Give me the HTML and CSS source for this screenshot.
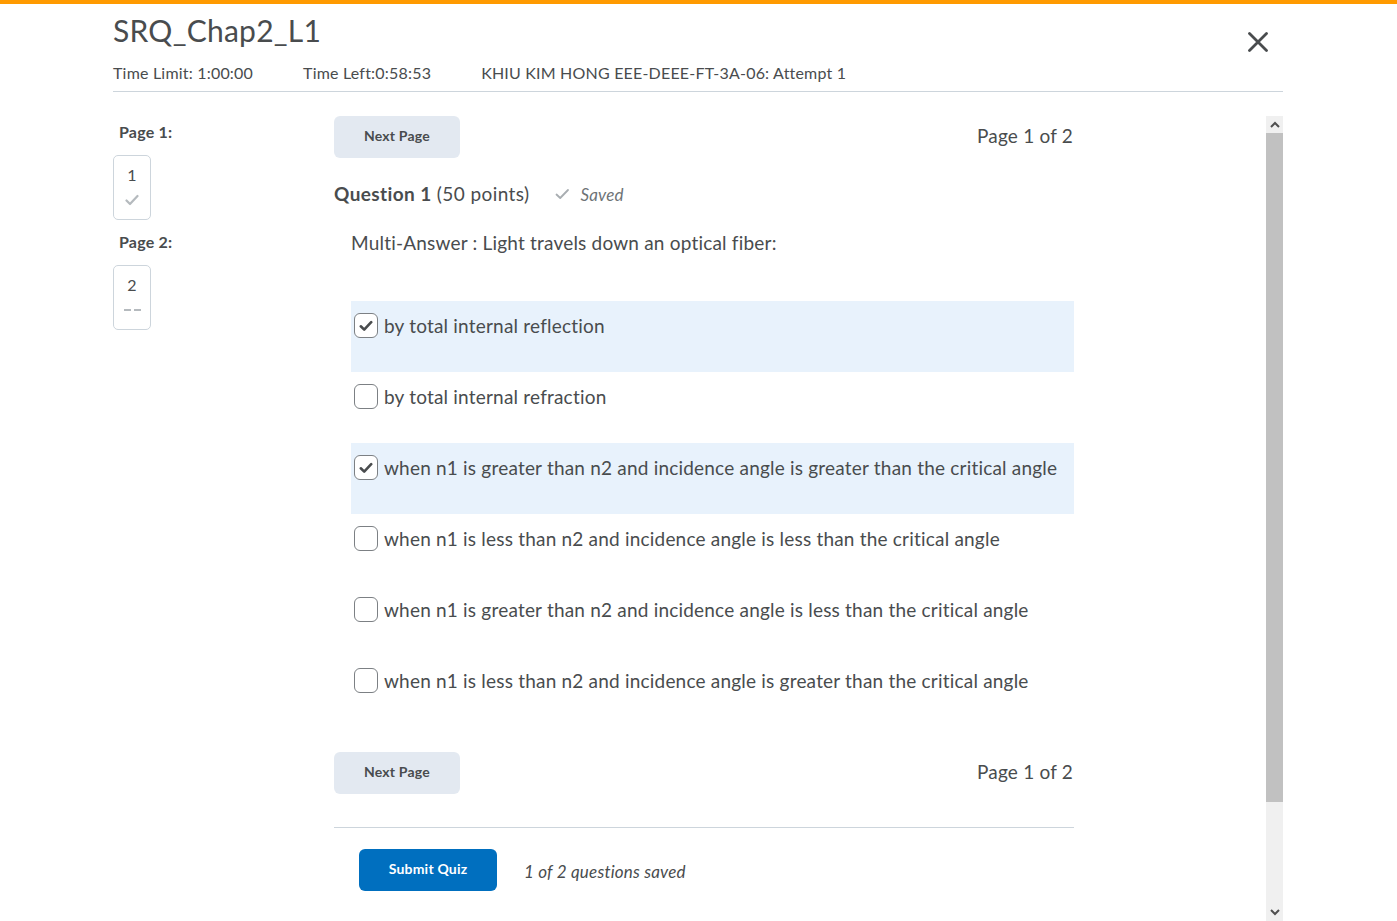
FILE: index.html
```html
<!DOCTYPE html>
<html lang="en">
<head>
<meta charset="utf-8">
<title>SRQ_Chap2_L1</title>
<link rel="stylesheet" href="styles.css">
</head>
<body>
<div class="topbar"></div>
<div class="wrap">
  <header class="header">
    <div class="title-row">
      <h1 class="title">SRQ_Chap2_L1</h1>
      <button class="close" aria-label="Close">
        <svg width="20" height="20" viewBox="0 0 20 20"><path d="M1.5 1.5 L18.5 18.5 M18.5 1.5 L1.5 18.5" stroke="#494c4e" stroke-width="2.8" stroke-linecap="round"/></svg>
      </button>
    </div>
    <div class="meta">
      <span class="meta-item">Time Limit: 1:00:00</span>
      <span class="meta-item">Time Left:0:58:53</span>
      <span class="meta-item">KHIU KIM HONG EEE-DEEE-FT-3A-06: Attempt 1</span>
    </div>
  </header>
  <div class="body">
    <div class="scroll">
      <nav class="nav">
        <div class="nav-label">Page 1:</div>
        <div class="nav-box">
          <span class="nav-num">1</span>
          <svg class="nav-check" width="14" height="12" viewBox="0 0 14 12"><path d="M1.5 6.5 L5 10 L12.5 2" fill="none" stroke="#b5babe" stroke-width="2.2" stroke-linecap="round" stroke-linejoin="round"/></svg>
        </div>
        <div class="nav-label">Page 2:</div>
        <div class="nav-box">
          <span class="nav-num">2</span>
          <span class="nav-dash"><i></i><i></i></span>
        </div>
      </nav>
      <main class="main">
        <div class="pager">
          <button class="btn-secondary">Next Page</button>
          <span class="page-of">Page 1 of 2</span>
        </div>
        <div class="q-head">
          <span class="q-title"><b>Question 1</b> (50 points)</span>
          <span class="saved">
            <svg width="15" height="12" viewBox="0 0 15 12"><path d="M1.5 6.5 L5.2 10 L13 2" fill="none" stroke="#a8adb1" stroke-width="1.8" stroke-linecap="round" stroke-linejoin="round"/></svg>
            <em>Saved</em>
          </span>
        </div>
        <p class="q-text">Multi-Answer : Light travels down an optical fiber:</p>
        <ul class="options">
          <li class="option selected"><span class="cb checked"><svg width="14" height="12" viewBox="0 0 14 12"><path d="M1.8 6.3 L5.2 9.6 L12.2 2.2" fill="none" stroke="#494c4e" stroke-width="2.6" stroke-linecap="round" stroke-linejoin="round"/></svg></span><span class="opt-text">by total internal reflection</span></li>
          <li class="option"><span class="cb"></span><span class="opt-text">by total internal refraction</span></li>
          <li class="option selected"><span class="cb checked"><svg width="14" height="12" viewBox="0 0 14 12"><path d="M1.8 6.3 L5.2 9.6 L12.2 2.2" fill="none" stroke="#494c4e" stroke-width="2.6" stroke-linecap="round" stroke-linejoin="round"/></svg></span><span class="opt-text">when n1 is greater than n2 and incidence angle is greater than the critical angle</span></li>
          <li class="option"><span class="cb"></span><span class="opt-text">when n1 is less than n2 and incidence angle is less than the critical angle</span></li>
          <li class="option"><span class="cb"></span><span class="opt-text">when n1 is greater than n2 and incidence angle is less than the critical angle</span></li>
          <li class="option"><span class="cb"></span><span class="opt-text">when n1 is less than n2 and incidence angle is greater than the critical angle</span></li>
        </ul>
        <div class="pager pager-bottom">
          <button class="btn-secondary">Next Page</button>
          <span class="page-of">Page 1 of 2</span>
        </div>
        <hr class="divider">
        <div class="submit-row">
          <button class="btn-primary">Submit Quiz</button>
          <em class="saved-count">1 of 2 questions saved</em>
        </div>
      </main>
    </div>
    <div class="scrollbar">
      <div class="sb-btn"><svg width="10" height="7" viewBox="0 0 10 7"><path d="M1 6 L5 2 L9 6" fill="none" stroke="#505050" stroke-width="2"/></svg></div>
      <div class="sb-thumb"></div>
      <div class="sb-track"></div>
      <div class="sb-btn"><svg width="10" height="7" viewBox="0 0 10 7"><path d="M1 1 L5 5 L9 1" fill="none" stroke="#505050" stroke-width="2"/></svg></div>
    </div>
  </div>
</div>
</body>
</html>
```

FILE: styles.css
```css
* { box-sizing: border-box; }
html, body { margin: 0; padding: 0; height: 100%; overflow: hidden; }
body {
  font-family: Lato, "Open Sans", "Liberation Sans", sans-serif;
  color: #494c4e;
  background: #fff;
  display: flex;
  flex-direction: column;
  letter-spacing: 0.2px;
  padding-right: 1px;
}
.topbar { height: 4px; background: #ff9a00; flex: none; margin-right: -1px; }
.wrap {
  width: 1170px;
  margin: 0 auto;
  flex: 1;
  display: flex;
  flex-direction: column;
  min-height: 0;
}
.header { border-bottom: 1px solid #cdd5dc; padding-bottom: 7px; flex: none; }
.title-row { display: flex; justify-content: space-between; align-items: flex-start; }
.title {
  margin: 8px 0 0 0;
  font-size: 30px;
  font-weight: 400;
  line-height: 36px;
  color: #494c4e;
  letter-spacing: 0.25px;
}
.close {
  border: 0; background: none; padding: 0;
  margin: 28px 15px 0 0;
  width: 20px; height: 20px;
  display: flex;
}
.meta { display: flex; margin-top: 10px; font-size: 16px; line-height: 22px; }
.meta-item { margin-right: 50px; }
.body {
  flex: 1;
  min-height: 0;
  display: flex;
  margin-top: 24px;
}
.scroll { flex: 1; display: flex; overflow: hidden; }
.nav { width: 221px; flex: none; }
.nav-label {
  font-size: 16px; font-weight: 700; line-height: 22px;
  padding-left: 6px; margin-top: 5px; margin-bottom: 12px;
}
.nav-box + .nav-label { margin-top: 11px; }
.nav-box {
  width: 38px; height: 65px;
  border: 1px solid #cdd5dc; border-radius: 5px;
  display: flex; flex-direction: column; align-items: center;
  padding-top: 8px;
}
.nav-num { font-size: 16px; line-height: 22px; }
.nav-check { margin-top: 8px; }
.nav-dash { display: flex; gap: 3px; margin-top: 13px; }
.nav-dash i { display: block; width: 7px; height: 2px; background: #b5babe; }
.main { width: 740px; flex: none; }
.pager { display: flex; justify-content: space-between; align-items: center; height: 42px; }
.btn-secondary {
  font-family: inherit;
  letter-spacing: 0.2px;
  width: 126px; height: 42px;
  border: 0; border-radius: 6px;
  background: #e3e9f1; color: #494c4e;
  font-size: 14px; font-weight: 700;
  padding: 0 0 3px 0;
}
.page-of { font-size: 19px; padding-right: 1px; margin-bottom: 4px; }
.q-head { display: flex; align-items: center; margin-top: 22px; height: 28px; }
.q-title { font-size: 19px; letter-spacing: 0.4px; margin-top: -2px; }
.q-title b { font-weight: 700; }
.saved { display: flex; align-items: center; margin-left: 26px; color: #6e7376; font-size: 17px; }
.saved svg { margin-right: 10px; }
.q-text { font-size: 19px; line-height: 28px; margin: 21px 0 0 17px; }
.options { list-style: none; margin: 44px 0 0 17px; padding: 0; }
.option {
  height: 71px;
  display: flex;
  align-items: flex-start;
  padding-top: 12px;
  padding-left: 3px;
}
.option.selected { background: #e8f2fc; }
.cb {
  width: 24px; height: 25px;
  border: 1px solid #7c8084; border-radius: 6px;
  background: #fff;
  display: flex; align-items: center; justify-content: center;
  flex: none;
}
.opt-text { font-size: 19px; line-height: 26px; margin-left: 6px; }
.pager-bottom { margin-top: 25px; }
.divider { border: 0; border-top: 1px solid #cdd5dc; margin: 33px 0 0 0; }
.submit-row { display: flex; align-items: center; margin-top: 21px; padding-left: 25px; }
.btn-primary {
  font-family: inherit;
  letter-spacing: 0.2px;
  width: 138px; height: 42px;
  border: 0; border-radius: 6px;
  background: #006fbf; color: #fff;
  font-size: 14px; font-weight: 700;
  padding: 0 0 3px 0;
}
.saved-count { margin-left: 27px; font-size: 17px; color: #494c4e; margin-top: 2px; }
.scrollbar {
  width: 17px; flex: none;
  display: flex; flex-direction: column;
  background: #f0f0f0;
}
.sb-btn { height: 17px; display: flex; align-items: center; justify-content: center; flex: none; }
.sb-thumb { height: 669px; background: #c1c1c1; flex: none; }
.sb-track { flex: 1; }
```
